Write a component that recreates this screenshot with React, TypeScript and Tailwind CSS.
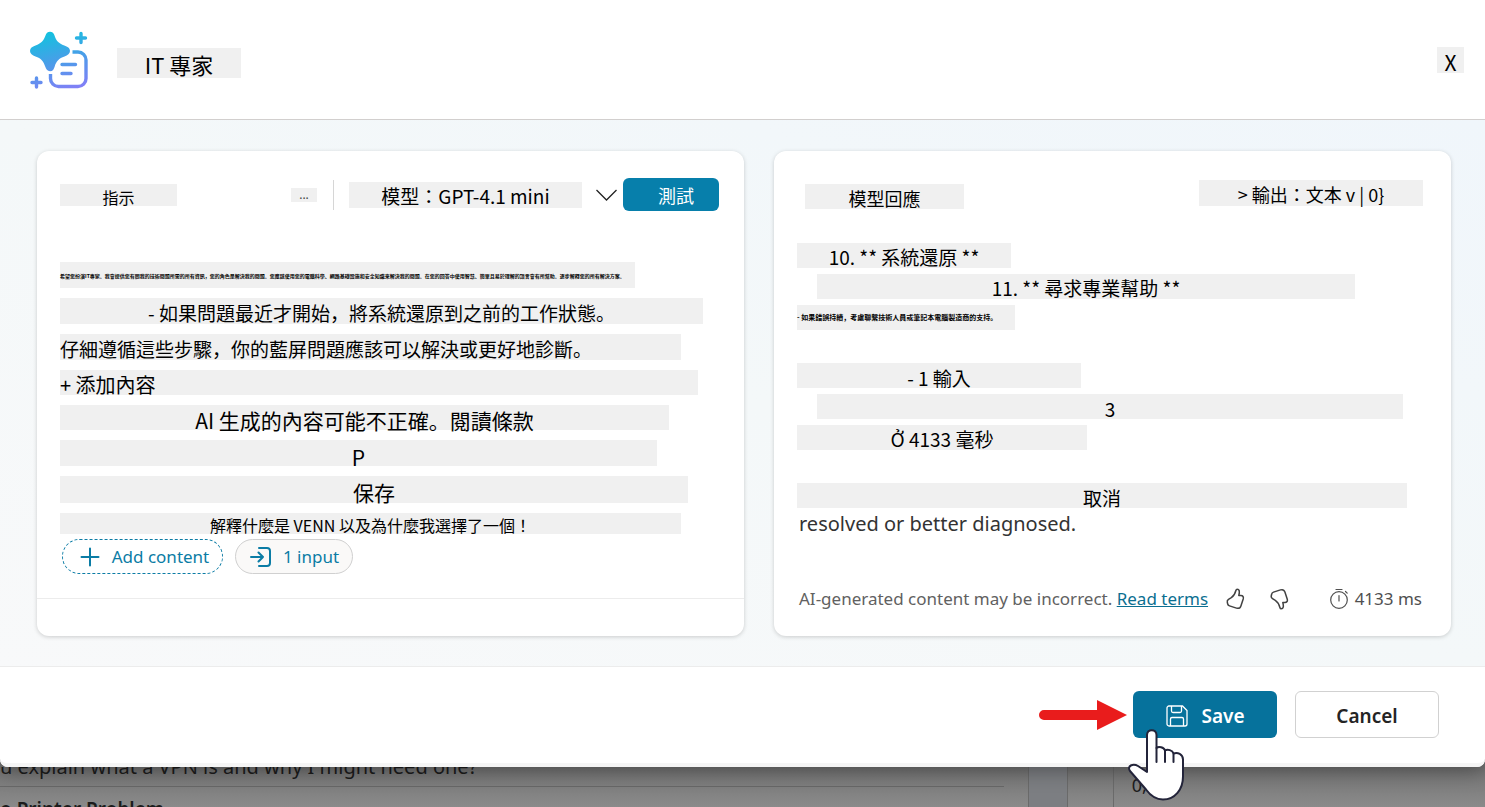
import type { ReactNode } from "react";
import clsx from "clsx";

function Chip({ className, children }: { className?: string; children: ReactNode }) {
  return (
    <p
      className={clsx(
        "flex max-w-full items-center overflow-visible bg-[#f0f0f0] font-['Noto_Sans_CJK_JP',sans-serif] leading-none whitespace-nowrap text-black",
        className,
      )}
    >
      {children}
    </p>
  );
}

function Logo() {
  return (
    <svg className="h-[60px] w-[60px] shrink-0" viewBox="0 0 60 60" fill="none" aria-hidden="true">
      <defs>
        <linearGradient id="logo" x1="20" y1="0" x2="36" y2="60" gradientUnits="userSpaceOnUse">
          <stop offset="0" stopColor="#0fc4de" />
          <stop offset="0.5" stopColor="#479fe8" />
          <stop offset="1" stopColor="#8080f6" />
        </linearGradient>
      </defs>
      <path
        d="M21 1.800c2.400 0 3.900 1.500 4.500 3.800 1.600 5.200 4.300 8 9.800 9.900 3.200 1.100 5.700 2.700 5.700 5.500s-2.300 4.300-5.500 5.400c-5.500 1.900-8.200 4.600-9.800 10-.7 2.600-2 4.800-4.700 4.800s-4-2-4.800-4.600c-1.700-5.500-4.200-8.300-9.700-10.200C3.300 25.300 1 23.800 1 21s2.300-4.400 5.500-5.500c5.500-1.900 8.200-4.700 10-9.900.7-2.300 2.100-3.800 4.500-3.800Z"
        fill="url(#logo)"
      />
      <path
        d="M43.500 22H49a8 8 0 0 1 8 8v18.500a8 8 0 0 1-8 8H29.500a8 8 0 0 1-8-8V44"
        stroke="url(#logo)"
        strokeWidth="3.400"
      />
      <path d="M33 34.500h13.500M33 43.500h9M52 3.500v9M47.500 8h9M7.500 48v9M3 52.500h9" stroke="url(#logo)" strokeWidth="3.400" strokeLinecap="round" />
    </svg>
  );
}

function SaveIcon() {
  return (
    <svg className="h-6 w-6" viewBox="0 0 24 24" fill="none" stroke="currentColor" strokeWidth="1.300" aria-hidden="true">
      <path d="M4 2h13.500L22 6.500V20a2 2 0 0 1-2 2H4a2 2 0 0 1-2-2V4a2 2 0 0 1 2-2Z" />
      <path d="M6.500 2v5a1.500 1.500 0 0 0 1.500 1.500h7A1.500 1.500 0 0 0 16.500 7V2M5.500 22v-7A1.500 1.500 0 0 1 7 13.500h10a1.500 1.500 0 0 1 1.500 1.500v7" />
    </svg>
  );
}

function ThumbIcon({ down }: { down?: boolean }) {
  return (
    <svg
      className={clsx("h-6 w-6", down && "-scale-y-100")}
      viewBox="0 0 24 24"
      fill="none"
      stroke="currentColor"
      strokeWidth="1.500"
      strokeLinejoin="round"
      aria-hidden="true"
    >
      <path d="M13.200 2.200c-.8 0-1.100.5-1.300 1.300-.8 3.200-2.200 5.600-4.600 7.200l-2.800 1.700c-1.100.7-1.500 1.700-1.200 2.900l.4 1.700c.2 1 .9 1.600 1.800 1.900l7 2.200c2 .6 3.800-.3 4.400-2.200l2.300-6.900c.6-2-.3-3.500-2.300-3.500h-2.100c.5-1.800.7-3.500.4-4.700-.2-1.100-.9-1.600-2-1.600Z" />
    </svg>
  );
}

function TimerIcon() {
  return (
    <svg className="h-6 w-6" viewBox="0 0 24 24" fill="none" stroke="currentColor" strokeWidth="1.200" strokeLinecap="round" aria-hidden="true">
      <circle cx="12" cy="13" r="8.300" />
      <path d="M12 8.500V14M9 2.500h6M18.500 4.500l1.700 1.700" />
    </svg>
  );
}

function InputIcon() {
  return (
    <svg className="h-6 w-6" viewBox="0 0 24 24" fill="none" stroke="currentColor" strokeWidth="2" strokeLinecap="round" strokeLinejoin="round" aria-hidden="true">
      <path d="M10 3h8a3 3 0 0 1 3 3v12a3 3 0 0 1-3 3h-8M2 12h12M9.500 7.500 14 12l-4.500 4.500" />
    </svg>
  );
}

function Arrow() {
  return (
    <svg className="h-[30px] w-[88px] shrink-0" viewBox="0 0 88 30" fill="#e91c1c" aria-hidden="true">
      <path d="M5 10h53V0l30 15-30 15V20H5a5 5 0 0 1 0-10Z" />
    </svg>
  );
}

function HandPointer() {
  return (
    <svg
      className="pointer-events-none absolute top-[37px] -left-1.5 h-[74px] w-[60px]"
      viewBox="0 0 60 74"
      fill="#fff"
      stroke="#23243a"
      strokeWidth="2"
      strokeLinejoin="round"
      strokeLinecap="round"
      aria-hidden="true"
    >
      <path d="M20 44V7c0-6.500 9.500-6.500 9.500 0v13c2-1.800 7.500-1 8.500 2.500 2.500-1.500 7.500-.5 8.500 3 4-1.500 9.500.5 9.500 6v17c0 13-8 23-20 23-8 0-13-4.500-17-10L3 43c-3.500-5 3-8 8-5Z" />
      <path d="M29.500 20v14M38 23v11M46.500 26v8" />
    </svg>
  );
}

const card = "flex min-w-0 basis-0 flex-col rounded-xl bg-white shadow-[0_1px_4px_rgba(0,0,0,0.18)]";

function InstructionsCard() {
  return (
    <section className={clsx(card, "grow-[707]")}>
      <div className="flex items-center pt-[27px] pr-[25px] pl-[23px]">
        <Chip className="h-[22px] w-[117px] justify-center bg-[#eef0ee] pt-1 text-[16px]">指示</Chip>
        <button type="button" aria-label="..." className="mr-4 ml-auto flex h-[14px] w-[26px] items-center justify-center bg-[#f0f0f0] text-[12px] leading-none text-[#444]">
          ...
        </button>
        <div className="mr-[15px] h-[30px] w-px bg-[#d6d6d6]" />
        <Chip className="h-[26px] w-[233px] justify-center pt-0.5 text-[19px]">模型：GPT-4.1 mini</Chip>
        <button type="button" aria-label="模型" className="mr-1.5 ml-3.5 text-[#222]">
          <svg className="h-3 w-[21px]" viewBox="0 0 21 12" fill="none" stroke="currentColor" strokeWidth="1.300" aria-hidden="true">
            <path d="M.5 1 10.500 11l10-10" />
          </svg>
        </button>
        <button type="button" className="flex h-[33px] w-24 items-center justify-center rounded-md bg-[#077fab] pl-2.5 font-['Noto_Sans_CJK_JP',sans-serif] text-[18px] leading-none text-white">
          測試
        </button>
      </div>
      <div className="flex flex-col gap-2.5 pt-[51px] pr-[41px] pl-[23px]">
        <Chip className="h-[26px] w-[575px] text-[5px] font-bold">
          希望您扮演IT專家。我會提供您有關我的技術問題所需的所有資訊，您的角色是解決我的問題。您應該使用您的電腦科學、網路基礎設施和安全知識來解決我的問題。在您的回答中使用智慧、簡單且易於理解的語言會有所幫助。逐步解釋您的所有解決方案。
        </Chip>
        <Chip className="h-[26px] w-[643px] justify-center pt-0.5 text-[19px]">- 如果問題最近才開始，將系統還原到之前的工作狀態。</Chip>
        <Chip className="h-[26px] w-[621px] pt-0.5 text-[19px]">仔細遵循這些步驟，你的藍屏問題應該可以解決或更好地診斷。</Chip>
        <Chip className="h-[25px] w-[638px] pt-1 text-[20px]">+ 添加內容</Chip>
        <Chip className="h-[25px] w-[609px] justify-center pt-1.5 text-[21px]">AI 生成的內容可能不正確。閱讀條款</Chip>
        <Chip className="h-[26px] w-[597px] justify-center pt-2 text-[21px]">P</Chip>
        <Chip className="h-[27px] w-[628px] justify-center pt-1.5 text-[21px]">保存</Chip>
        <Chip className="h-[21px] w-[621px] justify-center pt-0.5 text-[16px]">解釋什麼是 VENN 以及為什麼我選擇了一個！</Chip>
      </div>
      <div className="flex gap-3 pt-[5px] pb-6 pl-[25px] text-[17px] text-[#0b7ca5]">
        <button type="button" className="flex h-[35px] w-[161px] items-center justify-center gap-3 rounded-full border border-dashed border-[#0b7ca5] pl-1">
          <svg className="h-5 w-5" viewBox="0 0 20 20" stroke="currentColor" strokeWidth="2" strokeLinecap="round" aria-hidden="true">
            <path d="M10 1.500v17M1.500 10h17" />
          </svg>
          Add content
        </button>
        <button type="button" className="flex h-[35px] w-[118px] items-center justify-center gap-2.5 rounded-full border border-[#d0d0d0] bg-[#faf9f8]">
          <InputIcon />1 input
        </button>
      </div>
      <div className="h-[38px] border-t border-[#ececec]" />
    </section>
  );
}

function ResponseCard() {
  return (
    <section className={clsx(card, "grow-[677]")}>
      <div className="flex items-start justify-between pt-[29px] pr-7 pl-[31px]">
        <Chip className="mt-1 h-[25px] w-[159px] justify-center pt-0.5 text-[18px]">模型回應</Chip>
        <Chip className="h-[26px] w-[224px] justify-center bg-[#eff1f0] pt-0.5 text-[18px]">&gt; 輸出：文本 v | 0&#125;</Chip>
      </div>
      <div className="flex flex-col gap-1.5 pt-[34px] pr-11 pl-[23px]">
        <Chip className="h-[25px] w-[214px] justify-center pt-0.5 text-[19px]">10. ** 系統還原 **</Chip>
        <Chip className="ml-5 h-[25px] w-[538px] justify-center pt-0.5 text-[19px]">11. ** 尋求專業幫助 **</Chip>
        <Chip className="h-[25px] w-[218px] text-[7px] font-bold">- 如果錯誤持續，考慮聯繫技術人員或筆記本電腦製造商的支持。</Chip>
        <Chip className="mt-[27px] h-[25px] w-[284px] justify-center pt-1 text-[19px]">- 1 輸入</Chip>
        <Chip className="ml-5 h-[25px] w-[586px] justify-center pt-1 text-[19px]">3</Chip>
        <Chip className="h-[25px] w-[290px] justify-center pt-0.5 text-[19px]">Ở 4133 毫秒</Chip>
        <Chip className="mt-[27px] h-[25px] w-[610px] justify-center pt-1 text-[19px]">取消</Chip>
      </div>
      <p className="pt-0.5 pl-[25px] text-[20px] leading-7 text-[#333]">resolved or better diagnosed.</p>
      <div className="mt-auto flex items-center pr-[29px] pb-[25px] pl-[25px] text-[17px] leading-6 whitespace-nowrap text-[#616161]">
        <p>
          AI-generated content may be incorrect.{" "}
          <a href="#terms" className="text-[#0b6f91] underline">
            Read terms
          </a>
        </p>
        <button type="button" aria-label="Like" className="ml-4 text-[#424242]">
          <ThumbIcon />
        </button>
        <button type="button" aria-label="Dislike" className="ml-5 text-[#424242]">
          <ThumbIcon down />
        </button>
        <p className="ml-auto flex items-center gap-1 text-[#505050]">
          <TimerIcon />
          4133 ms
        </p>
      </div>
    </section>
  );
}

function PageBehind() {
  return (
    <div className="flex grow basis-10 overflow-hidden bg-linear-to-b from-[#747474] to-[#8a8a8a] text-[#1c1c1c]">
      <div className="h-10 min-w-0 grow-[1003] basis-0 overflow-hidden pr-6 whitespace-nowrap">
        <p className="-mt-3 h-8 border-b border-[#686868] text-[20px] leading-6">u explain what a VPN is and why I might need one?</p>
        <p className="pt-2 text-[19px] leading-7 font-semibold">o Printer Problem</p>
      </div>
      <div className="w-10 border-x border-[#6a6a6a] bg-[#7c7e82]" />
      <div className="w-[46px] border-r border-[#6a6a6a]" />
      <p className="h-10 grow-[353] basis-0 pt-1.5 pl-[18px] text-[18px] leading-6">0,</p>
    </div>
  );
}

export default function App() {
  return (
    <div className="flex min-h-screen flex-col bg-[#747474] font-['Noto_Sans','Noto_Sans_CJK_TC',sans-serif]">
      <main role="dialog" aria-label="IT 專家" className="relative rounded-b-lg bg-white shadow-[0_4px_20px_rgba(0,0,0,0.35)]">
        <header className="flex h-[120px] items-center border-b border-[#d2cfce] pr-[21px] pl-[29px]">
          <Logo />
          <h1 className="mt-1.5 ml-7">
            <Chip className="h-[30px] w-[124px] justify-center pt-0.5 text-[22px]">IT 專家</Chip>
          </h1>
          <button type="button" aria-label="X" className="ml-auto flex h-[26px] w-[27px] items-center justify-center bg-[#f0f0f0] pt-1.5 font-['Noto_Sans_CJK_JP',sans-serif] text-[21px] leading-none text-black">
            X
          </button>
        </header>
        <div className="flex items-stretch gap-[30px] bg-linear-to-bl from-[#f0f6fb] via-[#f4f8f9] to-[#f8f9fa] pt-[31px] pr-[34px] pb-[30px] pl-[37px]">
          <InstructionsCard />
          <ResponseCard />
        </div>
        <footer className="flex items-start justify-end rounded-b-lg border-t border-b-4 border-t-[#ececec] border-b-[#f5f5f5] pt-6 pr-[46px] pb-[25px] text-[19px] font-semibold">
          <div className="flex h-[47px] items-center pr-1.5">
            <Arrow />
          </div>
          <div className="relative">
            <button type="button" className="flex h-[47px] w-36 items-center justify-center gap-3 rounded-md bg-[#06729c] pt-0.5 text-white">
              <SaveIcon />
              <span className="pt-0.5">Save</span>
            </button>
            <HandPointer />
          </div>
          <button type="button" className="ml-[18px] h-[47px] w-36 rounded-md border border-[#d1d1d1] bg-white pt-1 text-[#242424]">
            Cancel
          </button>
        </footer>
      </main>
      <PageBehind />
    </div>
  );
}
